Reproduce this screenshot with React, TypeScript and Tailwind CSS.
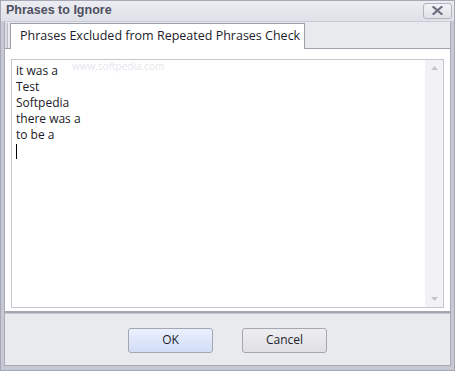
import React from "react";

export default function App() {
  const lines = ["it was a", "Test", "Softpedia", "there was a", "to be a"];
  return (
    <div
      className="w-[455px] h-[371px] bg-[#c6c8d4] border border-[#a6a8b6] flex flex-col overflow-hidden relative"
      style={{ fontFamily: '"Open Sans", "Noto Sans", "DejaVu Sans", sans-serif' }}
    >
      {/* Title bar */}
      <div className="h-[22px] flex items-center justify-between pl-[6px] pr-[3px] bg-gradient-to-b from-[#eceef3] to-[#dfe1e8] -mx-px -mt-px border-b border-[#c9cbd6]">
        <span
          className="font-bold text-[#4e5060] leading-none"
          style={{ fontFamily: '"Liberation Sans", Arial, sans-serif', fontSize: "12.5px" }}
        >
          Phrases to Ignore
        </span>
        <div className="w-[29px] h-[16px] rounded-[3px] border border-[#b2b4c0] bg-gradient-to-b from-[#f3f4f7] to-[#e0e2e8] flex items-center justify-center">
          <svg width="11" height="9" viewBox="0 0 11 9">
            <path d="M1.5 1 L9.5 8 M9.5 1 L1.5 8" stroke="#6e7080" strokeWidth="2.2" strokeLinecap="square" />
          </svg>
        </div>
      </div>

      {/* Body */}
      <div className="flex-1 flex flex-col mx-[3px] mb-[4px] border-x border-b border-[#a9abb8] bg-[#e9eaee]">
        {/* Tab row */}
        <div className="h-[26px] flex items-end">
          <div className="w-[3px] h-[25px] bg-[#dcdde4] border-r border-[#b8bac4]" />
          <div className="h-[26px] ml-[2px] w-[295px] bg-white border border-b-0 border-[#9c9ea8] flex items-center pl-[9px] relative z-10 -mb-px">
            <span className="text-[12.5px] text-[#1c1c2c] whitespace-nowrap">Phrases Excluded from Repeated Phrases Check</span>
          </div>
        </div>
        {/* Panel */}
        <div className="h-[265px] bg-white border-t border-[#a0a2ac] border-b-2 border-b-[#a4a6b0] shadow-[0_1px_0_#c8c9d0] px-[6px] pt-[10px] pb-[3px] flex">
          <div className="flex-1 border border-[#c5c6cf] flex relative overflow-hidden">
            <div className="flex-1 pl-[4px] pt-[3px] text-[12px] leading-[16px] text-[#1a1a28]">
              {lines.map((l) => (
                <div key={l}>{l}</div>
              ))}
              <div className="w-px h-[15px] bg-black mt-[1px]" />
            </div>
            <div className="absolute left-[60px] top-0 text-[10px] leading-[12px] text-[#e6e6ec] pointer-events-none">www.softpedia.com</div>
            <div className="w-[18px] bg-[#f2f2f5] flex flex-col items-center justify-between py-[6px]">
              <svg width="7" height="4" viewBox="0 0 7 4"><path d="M0 4 L3.5 0 L7 4 Z" fill="#c4c5cc" /></svg>
              <svg width="7" height="4" viewBox="0 0 7 4"><path d="M0 0 L3.5 4 L7 0 Z" fill="#c4c5cc" /></svg>
            </div>
          </div>
        </div>
        {/* Buttons */}
        <div className="flex-1 flex items-center justify-center gap-[29px] pt-[2px]">
          <button className="w-[85px] h-[25px] rounded-[3px] border border-[#a4a6b2] bg-gradient-to-b from-[#eaf0fd] to-[#d2ddf7] text-[12px] text-[#1c1c2c]">
            OK
          </button>
          <button className="w-[85px] h-[25px] rounded-[3px] border border-[#a4a6b2] bg-gradient-to-b from-[#eeeef1] to-[#e0e0e5] text-[12px] text-[#1c1c2c]">
            Cancel
          </button>
        </div>
      </div>
    </div>
  );
}
